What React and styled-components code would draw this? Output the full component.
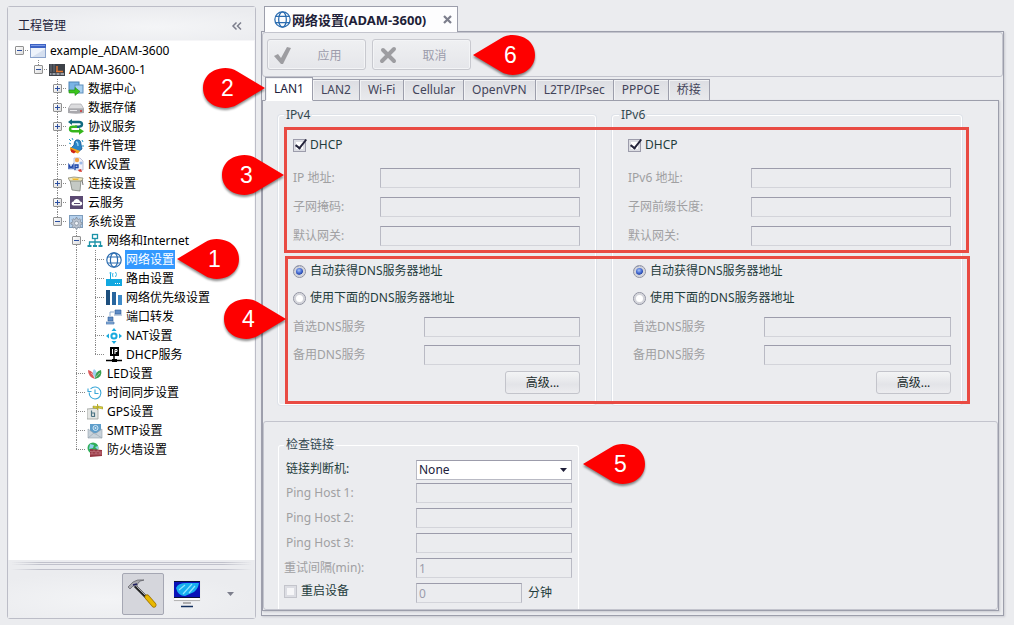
import React, { useState } from "react";
import styled, { createGlobalStyle, css } from "styled-components";

const GlobalStyle = createGlobalStyle`
  *, *::before, *::after { box-sizing: border-box; }
  body {
    margin: 0;
    background: #ebecef;
    color: #1f3c3c;
    font: 12px/16px "Noto Sans", "Noto Sans CJK SC", sans-serif;
  }
  button, input, select { font: inherit; color: inherit; margin: 0; }
`;

/* ---------- page ---------- */

const Page = styled.div`
  position: relative;
  display: flex;
  gap: 5px;
  min-height: 100vh;
  padding: 6px 10px 7px 7px;
`;

/* ---------- project sidebar ---------- */

const Sidebar = styled.aside`
  display: flex;
  flex-direction: column;
  flex: 0 0 249px;
  border: 1px solid #bcbdc7;
  border-radius: 3px;
`;

const SidebarHeader = styled.header`
  display: flex;
  align-items: center;
  justify-content: space-between;
  height: 34px;
  padding: 4px 12px 0 10px;
  border-bottom: 1px solid #f6f6f8;
  background: radial-gradient(ellipse at 60% 60%, #f4f5f7, #ebecef 70%);
  color: #22223a;
`;

const SidebarTitle = styled.h1`
  margin: 0;
  font-size: 12px;
  font-weight: 400;
`;

const IconButton = styled.button`
  display: flex;
  align-items: center;
  justify-content: center;
  padding: 0;
  border: 0;
  background: none;
  color: #7c7e8c;
`;

const Tree = styled.ul`
  flex: 1;
  margin: 0;
  padding: 0 0 0 1px;
  list-style: none;
  background: #fff;
  border: solid #f6f6f8;
  border-width: 0 1px;
  color: #000;
`;

const TreeRow = styled.li`
  display: flex;
  align-items: center;
  height: 19px;
`;

const dotsDown = "repeating-linear-gradient(to bottom, #888 0 1px, transparent 1px 2px)";
const dotsRight = "repeating-linear-gradient(to right, #888 0 1px, transparent 1px 2px)";

const Guide = styled.span`
  flex: 0 0 19px;
  height: 19px;
  background: ${(p) => (p.$line ? dotsDown : "none")} 9px 0 / 1px 100% no-repeat;
`;

const Branch = styled.span`
  display: flex;
  align-items: center;
  justify-content: center;
  flex: 0 0 19px;
  height: 19px;
  background:
    ${dotsRight} 9px 9px / 10px 1px no-repeat,
    ${(p) => (p.$root ? "none" : dotsDown)} 9px 0 / 1px ${(p) => (p.$last ? "10px" : "100%")} no-repeat;
`;

const Toggle = styled.button`
  position: relative;
  width: 9px;
  height: 9px;
  padding: 0;
  border: 1px solid #919191;
  border-radius: 1px;
  background: linear-gradient(135deg, #fff, #dcdcdc);
  &::before, &::after {
    content: "";
    position: absolute;
    left: 1px;
    top: 3px;
    width: 5px;
    height: 1px;
    background: #2c4fa0;
  }
  &::after {
    display: ${(p) => (p.$open ? "none" : "block")};
    left: 3px;
    top: 1px;
    width: 1px;
    height: 5px;
  }
`;

const TreeIcon = styled.svg`
  flex: 0 0 16px;
  width: 16px;
  height: 16px;
  margin: 0 3px 0 1px;
`;

const TreeLabel = styled.span`
  padding: 0 1px;
  line-height: 19px;
  white-space: nowrap;
  ${(p) => p.$selected && css`
    background: #3399ff;
    color: #fff;
  `}
`;

const Splitter = styled.div`
  height: 12px;
  margin: 0 3px;
  background:
    linear-gradient(to right, transparent, #c0c1cb 12%, #c0c1cb 88%, transparent) 0 2px / 100% 1px no-repeat,
    linear-gradient(to right, transparent, #c0c1cb 12%, #c0c1cb 88%, transparent) 0 4px / 100% 1px no-repeat,
    linear-gradient(to right, transparent, #c0c1cb 12%, #c0c1cb 88%, transparent) 0 9px / 100% 1px no-repeat;
`;

const ModeBar = styled.div`
  display: flex;
  align-items: center;
  justify-content: flex-end;
  gap: 10px;
  height: 46px;
  padding: 0 19px 2px 0;
  background: radial-gradient(ellipse at 40% 60%, #f3f4f6, #ebecef 70%);
`;

const ModeButton = styled.button`
  display: flex;
  align-items: center;
  justify-content: center;
  width: ${(p) => (p.$active ? 42 : 26)}px;
  height: 42px;
  padding: 0;
  border: 1px solid ${(p) => (p.$active ? "#a5a7b3" : "transparent")};
  border-radius: 2px;
  background: ${(p) => (p.$active ? "#d5d6dc" : "none")};
`;

const ModeMenu = styled(IconButton)`
  width: 12px;
  margin-left: 14px;
`;

/* ---------- document area ---------- */

const Workspace = styled.main`
  display: flex;
  flex-direction: column;
  flex: 1;
  min-width: 0;
  padding-bottom: 3px;
`;

const DocTab = styled.div`
  display: flex;
  align-items: center;
  align-self: flex-start;
  gap: 1px;
  z-index: 1;
  height: 26px;
  margin: 0 0 -1px 3px;
  padding: 0 5px 0 9px;
  border: 1px solid #9c9eab;
  border-bottom: 0;
  background: #fdfdfe;
`;

const DocTitle = styled.h2`
  margin: 0 16px 0 0;
  font-size: 13px;
  font-weight: 700;
  line-height: 16px;
  color: #1e1e38;
  white-space: nowrap;
`;

const DocPanel = styled.div`
  display: flex;
  flex-direction: column;
  flex: 1;
  border: 1px solid #9c9eab;
  box-shadow: 1px 1px 2px #c9cad1;
`;

const ActionBar = styled.div`
  display: flex;
  align-items: center;
  gap: 6px;
  height: 45px;
  padding-left: 4px;
  border: 1px solid #c3c4cd;
  border-radius: 3px;
`;

const ActionButton = styled.button`
  display: flex;
  align-items: center;
  width: 99px;
  height: 31px;
  padding: 0 5px;
  border: 1px solid #c8c9cf;
  border-radius: 3px;
  background: linear-gradient(#eff0f2, #e5e6ea);
  box-shadow: inset 0 0 0 1px #f3f4f6;
  color: #9c9cab;
  span { flex: 1; padding: 2px 0 0 6px; text-align: center; }
`;

const TabStrip = styled.div`
  display: flex;
  align-items: flex-end;
  height: 24px;
  padding-left: 3px;
`;

const Tab = styled.button`
  height: ${(p) => (p.$active ? 24 : 22)}px;
  padding: 0 8px;
  border: 1px solid #9c9eab;
  border-left-width: ${(p) => (p.$first ? 1 : 0)}px;
  border-bottom-color: ${(p) => (p.$active ? "#fff" : "#9c9eab")};
  background: ${(p) => (p.$active ? "#fff" : "linear-gradient(#dcdde2, #e9eaed)")};
  box-shadow: inset 1px 1px 0 #f2f3f5;
  color: ${(p) => (p.$active ? "#20203a" : "#43445a")};
  white-space: nowrap;
  z-index: 1;
`;

const Pane = styled.div`
  display: flex;
  flex-direction: column;
  flex: 1;
  margin: -1px 4px 4px 0;
  border: 1px solid #9c9eab;
  box-shadow: 1px 1px 2px #c9cad1;
`;

const ProtocolSection = styled.div`
  position: relative;
  display: grid;
  grid-template-columns: 318fr 350fr;
  gap: 16px;
  padding: 6px 36px 16px 15px;
`;

const GroupBox = styled.fieldset`
  min-width: 0;
  margin: 0;
  padding: 0 ${(p) => (p.$wide ? 10 : 15)}px 10px ${(p) => (p.$wide ? 15 : 14)}px;
  border: 1px solid #fff;
  border-radius: 3px;
  box-shadow: 0 0 0 1px #dfe3e9;
`;

const Legend = styled.legend`
  margin-left: ${(p) => (p.$flush ? 0 : -9)}px;
  padding: 0 2px;
  line-height: 16px;
  color: #33484f;
`;

const OptionRow = styled.label`
  display: flex;
  align-items: center;
  gap: 4px;
  height: 16px;
  white-space: nowrap;
`;

const DhcpRow = styled(OptionRow)`
  margin-top: 14px;
`;

const CheckBox = styled.input.attrs({ type: "checkbox" })`
  appearance: none;
  position: relative;
  flex: 0 0 13px;
  height: 13px;
  border: 1px solid #9c9cab;
  background: #fff;
  box-shadow: inset 0 0 0 2px #dcdde3;
  &:checked::after {
    content: "";
    position: absolute;
    left: 4px;
    top: -3px;
    width: 6px;
    height: 12px;
    border: solid #23233a;
    border-width: 0 2px 2px 0;
    transform: rotate(38deg);
  }
  &:disabled { border-color: #c3c4cb; background: #f6f6f8; }
`;

const Radio = styled.input.attrs({ type: "radio" })`
  appearance: none;
  flex: 0 0 13px;
  height: 13px;
  border: 1px solid #8f91a0;
  border-radius: 50%;
  background: #fff;
  box-shadow: inset 0 0 0 2px #d3d4da;
  &:checked { background: radial-gradient(circle at 45% 40%, #a9c4f5 0, #3c63cf 3px, #2c4ba5 4px, #fff 5px); }
`;

const AddressFields = styled.div`
  display: grid;
  grid-template-columns: ${(p) => (p.$wide ? 123 : 87)}px 1fr;
  gap: 9px 0;
  margin: 15px 0 17px;
`;

const DnsBlock = styled.div`
  display: flex;
  flex-direction: column;
  gap: 11px;
  padding-left: ${(p) => (p.$wide ? 5 : 0)}px;
`;

const DnsFields = styled.div`
  display: grid;
  grid-template-columns: 131px 1fr;
  gap: 8px 0;
`;

const FieldLabel = styled.label`
  align-self: center;
  padding-left: ${(p) => (p.$inset ? 2 : 0)}px;
  color: ${(p) => (p.$strong ? "#1f3c3c" : "#a0a0a2")};
  white-space: nowrap;
`;

const TextBox = styled.input.attrs({ type: "text" })`
  width: 100%;
  min-width: 0;
  height: 20px;
  padding: 0 2px;
  border: 1px solid #b9bac4;
  border-top-color: #9c9cab;
  border-bottom-color: #d3d4da;
  border-radius: 0;
  background: #ebecef;
  color: #9c9cab;
`;

const AdvancedButton = styled.button`
  align-self: flex-end;
  width: 75px;
  height: 23px;
  margin-top: -5px;
  padding: 0;
  border: 1px solid #c3c4cb;
  border-radius: 3px;
  background: linear-gradient(#f3f4f5, #e3e4e8 60%, #ececef);
  color: #1a2c2c;
`;

const LinkSection = styled.section`
  display: flex;
  flex: 1;
  padding: 15px 14px 0;
  border: 1px solid #c3c4cd;
  border-radius: 3px;
`;

const LinkBox = styled(GroupBox)`
  flex: 0 0 301px;
  padding: 0 6px 6px 5px;
  border-bottom: 0;
  border-radius: 3px 3px 0 0;
  box-shadow: none;
`;

const LinkFields = styled.div`
  display: grid;
  grid-template-columns: 132px 1fr;
  gap: 5px 0;
  margin-top: 7px;
`;

const SelectWrap = styled.span`
  position: relative;
  display: block;
  height: 18px;
  svg { position: absolute; right: 5px; top: 8px; pointer-events: none; }
`;

const Select = styled.select`
  appearance: none;
  width: 100%;
  height: 20px;
  padding: 0 2px;
  border: 1px solid #b9bac4;
  border-top-color: #9c9cab;
  border-radius: 0;
  background: #fff;
  color: #20203a;
`;

const UnitField = styled.span`
  display: grid;
  grid-template-columns: 106px auto;
  align-items: center;
  gap: 6px;
`;

/* ---------- annotations ---------- */

const Highlight = styled.div`
  position: absolute;
  top: ${(p) => p.$top}px;
  left: ${(p) => p.$left}px;
  right: ${(p) => 50 - p.$left}px;
  height: ${(p) => p.$height}px;
  border: 3px solid #e94b43;
  pointer-events: none;
`;

const Pin = styled.div`
  position: absolute;
  z-index: 2;
  left: ${(p) => p.$x}px;
  top: ${(p) => p.$y}px;
  width: 62px;
  height: 40px;
  color: #fff;
  font: 23px/40px "Liberation Sans", sans-serif;
  text-align: center;
  pointer-events: none;
  svg {
    position: absolute;
    inset: 0;
    overflow: visible;
    filter: drop-shadow(0 2px 1px rgba(0, 0, 0, 0.45));
    transform: ${(p) => (p.$flip ? "scaleX(-1)" : "none")};
  }
  span {
    position: relative;
    padding-left: ${(p) => (p.$flip ? 0 : 13)}px;
    padding-right: ${(p) => (p.$flip ? 13 : 0)}px;
  }
`;

function Callout({ n, x, y, flip }) {
  return (
    <Pin $x={x} $y={y} $flip={flip}>
      <svg width="62" height="40" viewBox="0 0 62 40" aria-hidden="true">
        <path d="M0 20 L28 3.2 C35 -1 44 -0.6 51 2.6 C58 6 62 12.500 62 20 C62 27.500 58 34 51 37.400 C44 40.600 35 41 28 36.800 Z" fill="#fe0000" />
      </svg>
      <span>{n}</span>
    </Pin>
  );
}

/* ---------- drawings ---------- */

const globe = (
  <g fill="none" stroke="#2b6cb0" strokeWidth="1.2">
    <circle cx="8" cy="8" r="7.2" />
    <ellipse cx="8" cy="8" rx="3.600" ry="7.200" />
    <path d="M1.500 5h13M1.500 11h13" />
  </g>
);

const gearPath = "M8 3.500l1 0 .4 1.500 1.200.5 1.400-.8 1 1-.8 1.400.5 1.200 1.500.4v1.400l-1.500.4-.5 1.200.8 1.400-1 1-1.400-.8-1.200.5-.4 1.500H8l-.4-1.500-1.200-.5-1.400.8-1-1 .8-1.400-.5-1.200L2.800 10.100V8.700l1.500-.4.500-1.200L4 5.700l1-1 1.400.8 1.200-.5z";

const icons = {
  window: (
    <g>
      <rect x=".5" y="1.500" width="15" height="13" fill="#eef3fb" stroke="#8ba3cc" />
      <path d="M0 1h16v4H0z" fill="#3d63c4" /><path d="M1 2h14v1H1z" fill="#7d9be6" />
      <path d="M2 14L15 6v8z" fill="#d5dfef" />
    </g>
  ),
  device: (
    <g>
      <path d="M0 2h16v12H0z" fill="#3d4148" /><path d="M2 2v8M5 2v8" stroke="#6c7078" />
      <path d="M8 4v6M7 9.500h7" stroke="#e2762f" strokeWidth="1.500" />
      <path d="M1 11h14v2H1z" fill="#9ba0a8" /><path d="M3 11v3M7 11v3M11 11v3" stroke="#3d4148" />
    </g>
  ),
  dataCenter: (
    <g>
      <rect x="1" y="1" width="10" height="9" fill="#79b4e6" stroke="#4f83b5" />
      <rect x="7" y="4" width="8" height="8" fill="#a8d0f0" stroke="#5e8fbd" />
      <path d="M1 9h6V6.500l5 4-5 4V12H1z" fill="#3bc41c" stroke="#1f8d12" strokeWidth=".6" />
    </g>
  ),
  disk: (
    <g>
      <path d="M3 4h10l3 5H0z" fill="#dcdcde" stroke="#9c9ca0" strokeWidth=".6" />
      <path d="M0 8.500h16V13q-8 1.500-16 0z" fill="#a9a9ad" />
      <path d="M2 10.500h7" stroke="#ececee" /><circle cx="13" cy="11" r="1" fill="#d43333" />
    </g>
  ),
  exchange: (
    <g fill="none" strokeWidth="2.400">
      <path d="M2 3h9q3 0 3 2.300T11 7.700H7" stroke="#0f6a80" /><path d="M4 0L0 3l4 3z" fill="#0f6a80" stroke="none" />
      <path d="M9 7.700H5q-3 0-3 2.200t3 2.300h7" stroke="#35b61c" /><path d="M11 9l5 3.300-5 3.500z" fill="#35b61c" stroke="none" />
    </g>
  ),
  bell: (
    <g>
      <path d="M8 2q5-1 5 4l1 5-4 3-7-4 3-3q0-4 2-5z" fill="#2a85c7" stroke="#174f86" strokeWidth=".7" />
      <path d="M8 4q2 0 2 4" fill="none" stroke="#9ad4f4" strokeWidth="1.300" />
      <path d="M2 9l10 4-2 2.500-8-3z" fill="#f0a21b" /><path d="M3 11l5 2.500-2 2-3-1.500z" fill="#cf2417" />
      <path d="M1 1l2 2M1 5l2 1M4 0l1 2M14 2l1 2M15 7v2" stroke="#2196c9" />
    </g>
  ),
  kw: (
    <g>
      <path d="M6 1h6l3 3v9H6z" fill="#f2f2fa" stroke="#a7acc8" strokeWidth=".7" />
      <circle cx="9" cy="3" r="2.200" fill="#f0a447" /><circle cx="13" cy="6" r="1.600" fill="#9dbbe8" />
      <path d="M0 7h11l-1 6H0z" fill="#d6e0f4" />
      <path d="M1 12V8l2 3 2-3v4M7 13V8h3v2.500H7" fill="none" stroke="#1e46a8" strokeWidth="1.300" />
      <path d="M10 13l3-1 1 3-3-.5z" fill="#d8392c" />
    </g>
  ),
  bucket: (
    <g>
      <path d="M2 4h11l-1 11-8-1z" fill="#c4c9c4" stroke="#70756f" strokeWidth=".7" />
      <path d="M0 2l6-1 9 1-1 3-12 0z" fill="#eee7c0" stroke="#7d7b64" strokeWidth=".7" />
      <path d="M4 2.500h7l-1 1.500H5z" fill="#f1b82a" /><path d="M14 4l1 5" stroke="#777" />
    </g>
  ),
  cloud: (
    <g>
      <path d="M2 1h13v13H2z" fill="#5b4a73" />
      <path d="M5.500 10.500a2 2 0 010-4q1-3 3.500-2.500 2.500.2 3 2.500a2 2 0 01.5 4z" fill="#fff" /><path d="M6 8.500h6" stroke="#5b4a73" />
    </g>
  ),
  system: (
    <g>
      <rect x="1.500" y="1.500" width="13" height="12" fill="#b5d0ec" stroke="#7e9dbd" />
      <path d={gearPath} fill="#b9c2cf" stroke="#7d8897" strokeWidth=".7" />
      <circle cx="8.500" cy="9.300" r="2" fill="#eef2f7" stroke="#7d8897" strokeWidth=".7" />
    </g>
  ),
  lan: (
    <g fill="none" stroke="#1c93a8" strokeWidth="1.300">
      <rect x="5.500" y="1.500" width="5" height="4" /><path d="M8 6v3M2.500 12V9h11v3M8 9v3" />
      <path d="M.5 13h4M6 13h4M11.500 13h4" strokeWidth="2.200" />
    </g>
  ),
  globe,
  router: (
    <g>
      <path d="M0 8h16v7H0z" fill="#12a8e0" /><path d="M4.500 8V2" stroke="#12a8e0" />
      <path d="M9 12.500h5" stroke="#fff" strokeDasharray="1 1" />
      <path d="M7 2q-1 2 0 4M9.500 1q2 2.500 0 5" fill="none" stroke="#35b6e6" /><circle cx="4.500" cy="2" r="1" fill="#35b6e6" />
    </g>
  ),
  bars: (
    <g><path d="M0 0h4v15H0z" fill="#1e4f7d" /><path d="M6 2h4v13H6z" fill="#27659e" /><path d="M12 5h4v10h-4z" fill="#3d8bc9" /></g>
  ),
  forward: (
    <g>
      <path d="M9 1h6v4H9zM2 8h5v4H2z" fill="#5f8dc7" stroke="#315b95" strokeWidth=".6" />
      <path d="M0 13h8v2H0zM8 6h8" fill="#86aeda" stroke="#4a76ae" strokeWidth=".7" />
      <path d="M4 7V3h4" fill="none" stroke="#8aa9cc" />
    </g>
  ),
  nat: (
    <g fill="#18abdf">
      <path d="M8 0l2.500 3h-5zM8 16l2.500-3h-5zM0 8l3-2.500v5zM16 8l-3-2.500v5z" />
      <circle cx="8" cy="8" r="2.600" fill="none" stroke="#18abdf" strokeWidth="2" />
    </g>
  ),
  dhcp: (
    <g>
      <path d="M4 0h9v9H4z" /><path d="M6.500 2v5M9 7V2.500h2v2H9" fill="none" stroke="#fff" />
      <path d="M8 9v4M0 13.500h16" stroke="#000" strokeWidth="1.500" /><path d="M6 12h5v3H6z" />
    </g>
  ),
  led: (
    <g>
      <path d="M8 13Q1 11 1 4q6 1 7 9z" fill="#dd5858" /><path d="M8 13Q4 7 7 3q5 3 1 10z" fill="#9fd0ef" />
      <path d="M8 13q0-8 6-9 2 7-6 9z" fill="#3aa050" /><path d="M8 12q-2-4-4-5M9 11q2-3 4-4" fill="none" stroke="#f6d9d9" strokeWidth=".6" />
    </g>
  ),
  clock: (
    <g fill="none" stroke="#3aa7d8" strokeWidth="1.100">
      <path d="M3.500 4A6 6 0 118 14 6 6 0 012.200 7.500M8 4.500V8.500h3.500" /><path d="M1 3.500V6.500h3.500" />
    </g>
  ),
  gps: (
    <g>
      <path d="M0 5l11-1v11H0z" fill="#e4e6e4" stroke="#9b9f9b" strokeWidth=".8" />
      <path d="M4.500 6.500v6M4.500 9h3v3.500h-3" fill="none" stroke="#4c7484" strokeWidth="1.200" />
      <path d="M6 2l4 .5v2L6 4zM11 2l5 1v2l-5-1z" fill="#d9cf34" stroke="#918b2b" strokeWidth=".5" /><path d="M10.500 0v6" stroke="#b8ae2c" />
    </g>
  ),
  mail: (
    <g>
      <path d="M3 1h11v9H3z" fill="#5e9ecb" /><circle cx="8.500" cy="5" r="2.500" fill="none" stroke="#d3e8f6" /><circle cx="8.500" cy="5" r=".9" fill="#d3e8f6" />
      <path d="M1 6l7 5 7-5v9H1z" fill="#c8d2da" stroke="#93a1ad" strokeWidth=".6" /><path d="M1 15l6-5 8 5" fill="none" stroke="#93a1ad" strokeWidth=".6" />
    </g>
  ),
  firewall: (
    <g>
      <circle cx="6" cy="6" r="5.500" fill="#2fae5a" /><path d="M3 2l4 1-1 3-4 1zM8 5l3-1v4z" fill="#8fd0ee" />
      <path d="M3 7l12 1v6l-12 1z" fill="#963642" /><path d="M3 9.500l12 .5M3 12l12 0M7 7.500v2M11 8v2M5 10v2M9 10v2M13 10v2" stroke="#d08c94" strokeWidth=".6" />
    </g>
  ),
};

const Glyph = styled.svg`
  flex: none;
  display: block;
`;

const HammerIcon = () => (
  <Glyph width="32" height="32" viewBox="0 0 32 32" aria-hidden="true">
    <path d="M8 8l12 12" stroke="#222" strokeWidth="3" /><path d="M9 8l11 11" stroke="#a8a8ae" strokeWidth="1" />
    <path d="M20 19l7 8" stroke="#a07400" strokeWidth="5" strokeLinecap="round" /><path d="M20 19l7 8" stroke="#e9b800" strokeWidth="3.500" strokeLinecap="round" />
    <path d="M1 9l5-5q4-3 11-2-4 .500-6 3l-1 3-4 0-3 3z" fill="#a9a9ae" stroke="#4e4e55" strokeWidth=".6" /><path d="M6 7l4-1" stroke="#1c1c5e" strokeWidth="1.500" />
  </Glyph>
);

const MonitorIcon = () => (
  <Glyph width="28" height="28" viewBox="0 0 28 28" aria-hidden="true">
    <path d="M1 1h26v20H1z" fill="#fff" stroke="#ddd" strokeWidth=".5" /><path d="M1 1h26v17H1z" fill="#0b1038" /><path d="M1 2h26v15H1z" fill="#0a12b8" />
    <path d="M3 8q2-5 10-5h13q-1 6-5 9l-9 4q-7 0-9-8z" fill="#17aef0" /><path d="M6 10l6-5M10 14l9-10M16 13l6-7" stroke="#8de4ff" strokeWidth="1.200" />
    <path d="M1 20.500h26" stroke="#b5b5b5" /><path d="M10 23h8" stroke="#999" strokeWidth="1.500" /><path d="M8 26.500h12" stroke="#14305e" strokeWidth="1.500" />
  </Glyph>
);

/* ---------- data ---------- */

const nodes = [
  { id: "root", level: 0, icon: "window", text: "example_ADAM-3600", open: true, last: true },
  { id: "dev", level: 1, icon: "device", text: "ADAM-3600-1", open: true, last: true },
  { id: "center", level: 2, icon: "dataCenter", text: "数据中心", open: false },
  { id: "store", level: 2, icon: "disk", text: "数据存储", open: false },
  { id: "proto", level: 2, icon: "exchange", text: "协议服务", open: false },
  { id: "event", level: 2, icon: "bell", text: "事件管理" },
  { id: "kw", level: 2, icon: "kw", text: "KW设置" },
  { id: "conn", level: 2, icon: "bucket", text: "连接设置", open: false },
  { id: "cloud", level: 2, icon: "cloud", text: "云服务", open: false },
  { id: "sys", level: 2, icon: "system", text: "系统设置", open: true, last: true },
  { id: "net", level: 3, icon: "lan", text: "网络和Internet", open: true },
  { id: "netset", level: 4, icon: "globe", text: "网络设置", selected: true },
  { id: "route", level: 4, icon: "router", text: "路由设置" },
  { id: "prio", level: 4, icon: "bars", text: "网络优先级设置" },
  { id: "port", level: 4, icon: "forward", text: "端口转发" },
  { id: "nat", level: 4, icon: "nat", text: "NAT设置" },
  { id: "dhcp", level: 4, icon: "dhcp", text: "DHCP服务", last: true },
  { id: "led", level: 3, icon: "led", text: "LED设置" },
  { id: "time", level: 3, icon: "clock", text: "时间同步设置" },
  { id: "gps", level: 3, icon: "gps", text: "GPS设置" },
  { id: "smtp", level: 3, icon: "mail", text: "SMTP设置" },
  { id: "fw", level: 3, icon: "firewall", text: "防火墙设置", last: true },
];

const tabs = ["LAN1", "LAN2", "Wi-Fi", "Cellular", "OpenVPN", "L2TP/IPsec", "PPPOE", "桥接"];

function TreeNode({ node }) {
  const guides = [];
  for (let i = 0; i < node.level; i++) guides.push(<Guide key={i} $line={i === 3} />);
  return (
    <TreeRow>
      {guides}
      <Branch $root={node.level === 0} $last={node.last}>
        {node.open !== undefined && (
          <Toggle type="button" $open={node.open} aria-label={node.text} aria-expanded={node.open} />
        )}
      </Branch>
      <TreeIcon viewBox="0 0 16 16" aria-hidden="true">{icons[node.icon]}</TreeIcon>
      <TreeLabel $selected={node.selected}>{node.text}</TreeLabel>
    </TreeRow>
  );
}

function ProtocolGroup({ id, title, fields, wide }) {
  const [dhcp, setDhcp] = useState(true);
  const [auto, setAuto] = useState(true);
  return (
    <GroupBox $wide={wide}>
      <Legend>{title}</Legend>
      <DhcpRow>
        <CheckBox checked={dhcp} onChange={(e) => setDhcp(e.target.checked)} />
        DHCP
      </DhcpRow>
      <AddressFields $wide={wide}>
        {fields.map((f, i) => (
          <React.Fragment key={f}>
            <FieldLabel htmlFor={`${id}-a${i}`}>{f}</FieldLabel>
            <TextBox id={`${id}-a${i}`} disabled={dhcp} />
          </React.Fragment>
        ))}
      </AddressFields>
      <DnsBlock $wide={wide}>
        <OptionRow>
          <Radio name={`${id}-dns`} checked={auto} onChange={() => setAuto(true)} />
          自动获得DNS服务器地址
        </OptionRow>
        <OptionRow>
          <Radio name={`${id}-dns`} checked={!auto} onChange={() => setAuto(false)} />
          使用下面的DNS服务器地址
        </OptionRow>
        <DnsFields>
          <FieldLabel htmlFor={`${id}-d1`}>首选DNS服务</FieldLabel>
          <TextBox id={`${id}-d1`} disabled={auto} />
          <FieldLabel htmlFor={`${id}-d2`}>备用DNS服务</FieldLabel>
          <TextBox id={`${id}-d2`} disabled={auto} />
        </DnsFields>
        <AdvancedButton type="button">高级...</AdvancedButton>
      </DnsBlock>
    </GroupBox>
  );
}

export default function App() {
  const [tab, setTab] = useState("LAN1");
  return (
    <Page>
      <GlobalStyle />
      <Sidebar>
        <SidebarHeader>
          <SidebarTitle>工程管理</SidebarTitle>
          <IconButton type="button" aria-label="折叠">
            <Glyph width="12" height="10" viewBox="0 0 12 10" fill="none" stroke="currentColor" strokeWidth="1.500">
              <path d="M5.500 1.500L2 5l3.500 3.500M10 1.500L6.500 5 10 8.500" />
            </Glyph>
          </IconButton>
        </SidebarHeader>
        <Tree>{nodes.map((n) => <TreeNode key={n.id} node={n} />)}</Tree>
        <Splitter />
        <ModeBar>
          <ModeButton type="button" $active aria-label="工程"><HammerIcon /></ModeButton>
          <ModeButton type="button" aria-label="监控"><MonitorIcon /></ModeButton>
          <ModeMenu type="button" aria-label="更多">
            <Glyph width="7" height="4" viewBox="0 0 7 4"><path d="M0 0h7L3.500 4z" fill="currentColor" /></Glyph>
          </ModeMenu>
        </ModeBar>
      </Sidebar>

      <Workspace>
        <DocTab>
          <Glyph width="17" height="17" viewBox="0 0 16 16" aria-hidden="true">{globe}</Glyph>
          <DocTitle>网络设置(ADAM-3600)</DocTitle>
          <IconButton type="button" aria-label="关闭">
            <Glyph width="9" height="9" viewBox="0 0 9 9" stroke="currentColor" strokeWidth="2.200"><path d="M1 1l7 7M8 1L1 8" /></Glyph>
          </IconButton>
        </DocTab>
        <DocPanel>
          <ActionBar>
            <ActionButton type="button" disabled>
              <Glyph width="20" height="20" viewBox="0 0 20 20" aria-hidden="true">
                <path d="M1 11l4-2 3 4 6-11 4 1-8 16H8z" fill="#9d9da1" />
              </Glyph>
              <span>应用</span>
            </ActionButton>
            <ActionButton type="button" disabled>
              <Glyph width="20" height="20" viewBox="0 0 20 20" aria-hidden="true">
                <path d="M5 5l11 11M16 4L4 16" stroke="#9d9da1" strokeWidth="4" strokeLinecap="round" />
              </Glyph>
              <span>取消</span>
            </ActionButton>
          </ActionBar>
          <TabStrip role="tablist">
            {tabs.map((t, i) => (
              <Tab key={t} type="button" role="tab" aria-selected={t === tab} $active={t === tab} $first={i === 0} onClick={() => setTab(t)}>
                {t}
              </Tab>
            ))}
          </TabStrip>
          <Pane>
            <ProtocolSection>
              <ProtocolGroup id="v4" title="IPv4" fields={["IP 地址:", "子网掩码:", "默认网关:"]} />
              <ProtocolGroup id="v6" title="IPv6" fields={["IPv6 地址:", "子网前缀长度:", "默认网关:"]} wide />
              <Highlight $top={26} $left={21} $height={126} />
              <Highlight $top={155} $left={22} $height={148} />
            </ProtocolSection>
            <LinkSection>
              <LinkBox>
                <Legend $flush>检查链接</Legend>
                <LinkFields>
                  <FieldLabel htmlFor="mode" $strong $inset>链接判断机:</FieldLabel>
                  <SelectWrap>
                    <Select id="mode" defaultValue="None"><option>None</option></Select>
                    <svg width="7" height="4" viewBox="0 0 7 4" aria-hidden="true"><path d="M0 0h7L3.500 4z" fill="#1e1e38" /></svg>
                  </SelectWrap>
                  {[1, 2, 3].map((n) => (
                    <React.Fragment key={n}>
                      <FieldLabel htmlFor={`ping${n}`} $inset>{`Ping Host ${n}:`}</FieldLabel>
                      <TextBox id={`ping${n}`} disabled />
                    </React.Fragment>
                  ))}
                  <FieldLabel htmlFor="retry">重试间隔(min):</FieldLabel>
                  <TextBox id="retry" defaultValue="1" disabled />
                  <OptionRow>
                    <CheckBox disabled />
                    重启设备
                  </OptionRow>
                  <UnitField>
                    <TextBox id="reboot" defaultValue="0" disabled />
                    <label htmlFor="reboot">分钟</label>
                  </UnitField>
                </LinkFields>
              </LinkBox>
            </LinkSection>
          </Pane>
        </DocPanel>
      </Workspace>

      <Callout n="1" x={177} y={239} />
      <Callout n="2" x={203} y={68} flip />
      <Callout n="3" x={222} y={155} flip />
      <Callout n="4" x={224} y={299} flip />
      <Callout n="5" x={583} y={444} />
      <Callout n="6" x={473} y={35} />
    </Page>
  );
}
